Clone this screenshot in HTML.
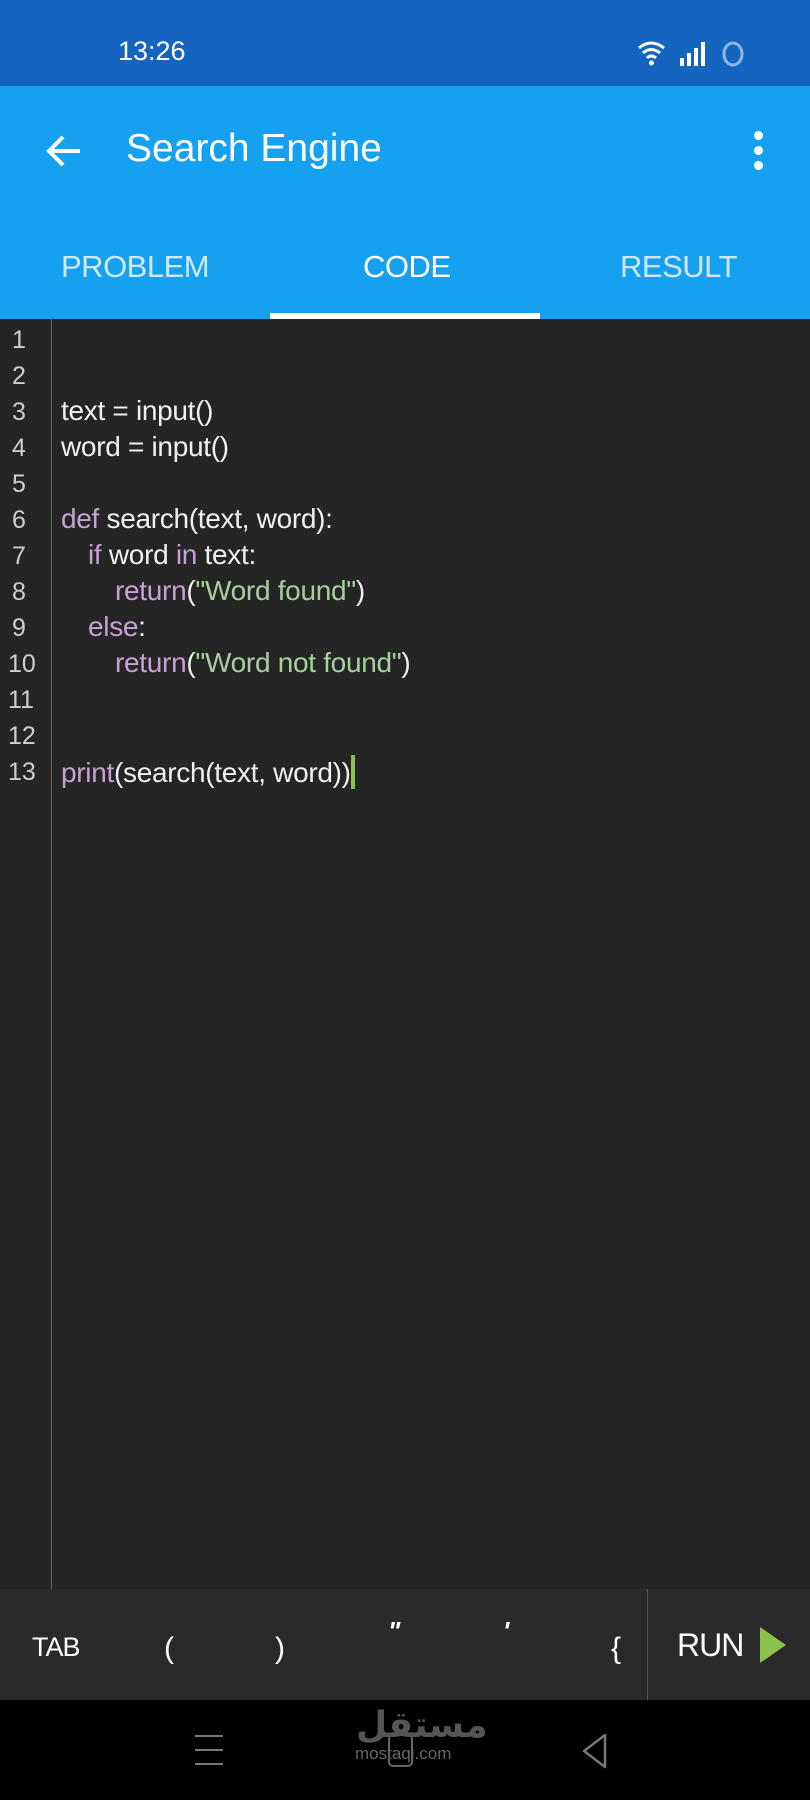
<!DOCTYPE html>
<html><head><meta charset="utf-8"><style>
*{margin:0;padding:0;box-sizing:border-box}
body{width:810px;height:1800px;background:#252525;font-family:"Liberation Sans",sans-serif;position:relative;overflow:hidden;color:#fff}
.abs{position:absolute}
#status{left:0;top:0;width:810px;height:86px;background:#1565c0}
#bar{left:0;top:86px;width:810px;height:233px;background:#15a0f0}
.tab{top:249px;font-size:31px;letter-spacing:-0.5px;color:#cfe9fb}
#code{left:0;top:322px;width:810px}
.ln{position:absolute;left:0;width:44px;font-size:25px;color:#cfcfcf;padding-left:12px}
.cl{position:absolute;left:61px;font-size:28px;color:#f0f0f0;letter-spacing:-0.3px;white-space:pre}
.k{color:#c9a0d6}.s{color:#a5d19a}
#bottom{left:0;top:1589px;width:810px;height:111px;background:#2a2a2a}
.bk{top:1632px;font-size:30px;color:#fff}
#nav{left:0;top:1700px;width:810px;height:100px;background:#000}
</style></head><body>
<div id="status" class="abs">
 <div class="abs" style="left:118px;top:36px;font-size:27px;color:#fff">13:26</div>
 <svg class="abs" style="left:636px;top:38px" width="110" height="30" viewBox="0 0 110 30">
  <path d="M3 10 Q15 0 28 10" stroke="#fff" stroke-width="3" fill="none"/>
  <path d="M7 15 Q15 8 24 15" stroke="#fff" stroke-width="3" fill="none"/>
  <path d="M11 20 Q15 16 20 20" stroke="#fff" stroke-width="3" fill="none"/>
  <circle cx="15.5" cy="25" r="2.5" fill="#fff"/>
  <rect x="44" y="20" width="4" height="8" fill="#fff"/><rect x="51" y="15" width="4" height="13" fill="#fff"/>
  <rect x="58" y="10" width="4" height="18" fill="#fff"/><rect x="65" y="4" width="4" height="24" fill="#fff"/>
  <ellipse cx="97" cy="16" rx="9" ry="11" stroke="#8fb6e8" stroke-width="3" fill="none"/>
 </svg>
</div>
<div id="bar" class="abs">
 <svg class="abs" style="left:44px;top:45px" width="40" height="40" viewBox="0 0 40 40"><path d="M36 20H6M19 6L5 20l14 14" stroke="#fff" stroke-width="4" fill="none"/></svg>
 <div class="abs" style="left:126px;top:41px;font-size:39px;color:#fff">Search Engine</div>
 <div class="abs" style="left:754px;top:45px;width:10px">
  <div style="width:9px;height:9px;border-radius:50%;background:#fff;margin-bottom:6px"></div>
  <div style="width:9px;height:9px;border-radius:50%;background:#fff;margin-bottom:6px"></div>
  <div style="width:9px;height:9px;border-radius:50%;background:#fff"></div>
 </div>
</div>
<div class="abs tab" style="left:61px">PROBLEM</div>
<div class="abs tab" style="left:363px;color:#fff">CODE</div>
<div class="abs tab" style="left:620px">RESULT</div>
<div class="abs" style="left:270px;top:313px;width:270px;height:6px;background:#fff"></div>
<div class="abs" style="left:51px;top:319px;width:1px;height:1270px;background:#666"></div>
<div id="code" class="abs">
 <div class="ln" style="top:4px">1</div>
 <div class="ln" style="top:40px">2</div>
 <div class="ln" style="top:76px">3</div>
 <div class="ln" style="top:112px">4</div>
 <div class="ln" style="top:148px">5</div>
 <div class="ln" style="top:184px">6</div>
 <div class="ln" style="top:220px">7</div>
 <div class="ln" style="top:256px">8</div>
 <div class="ln" style="top:292px">9</div>
 <div class="ln" style="top:328px;padding-left:8px">10</div>
 <div class="ln" style="top:364px;padding-left:8px">11</div>
 <div class="ln" style="top:400px;padding-left:8px">12</div>
 <div class="ln" style="top:436px;padding-left:8px">13</div>
 <div class="cl" style="top:73px">text = input()</div>
 <div class="cl" style="top:109px">word = input()</div>
 <div class="cl" style="top:181px"><span class="k">def</span> search(text, word):</div>
 <div class="cl" style="top:217px;left:88px"><span class="k">if</span> word <span class="k">in</span> text:</div>
 <div class="cl" style="top:253px;left:115px"><span class="k">return</span>(<span class="s">"Word found"</span>)</div>
 <div class="cl" style="top:289px;left:88px"><span class="k">else</span>:</div>
 <div class="cl" style="top:325px;left:115px"><span class="k">return</span>(<span class="s">"Word not found"</span>)</div>
 <div class="cl" style="top:433px"><span class="k">print</span>(search(text, word))<span style="display:inline-block;width:4px;height:34px;background:#8bc34a;vertical-align:-7px"></span></div>
</div>
<div id="bottom" class="abs">
 <div class="abs" style="left:647px;top:0;width:1px;height:111px;background:#555"></div>
</div>
<div class="abs" style="left:32px;top:1632px;font-size:27px;letter-spacing:-1px">TAB</div>
<div class="abs bk" style="left:164px">(</div>
<div class="abs bk" style="left:275px">)</div>
<div class="abs" style="left:388px;top:1616px;font-size:26px;font-style:italic;font-weight:bold">"</div>
<div class="abs" style="left:503px;top:1616px;font-size:26px;font-style:italic;font-weight:bold">'</div>
<div class="abs bk" style="left:611px">{</div>
<div class="abs" style="left:677px;top:1627px;font-size:32px;letter-spacing:-1px">RUN</div>
<svg class="abs" style="left:760px;top:1627px" width="28" height="36"><path d="M0 0L26 18L0 36Z" fill="#8bc34a"/></svg>
<div id="nav" class="abs">
 <div class="abs" style="left:195px;top:35px;width:28px;height:2px;background:#777"></div>
 <div class="abs" style="left:195px;top:49px;width:28px;height:2px;background:#777"></div>
 <div class="abs" style="left:195px;top:63px;width:28px;height:2px;background:#777"></div>
 <div class="abs" style="left:388px;top:34px;width:25px;height:33px;border:2px solid #666;border-radius:5px"></div>
 <div class="abs" style="left:356px;top:5px;font-size:36px;font-weight:bold;color:#555;font-family:'DejaVu Sans',sans-serif">مستقل</div>
 <div class="abs" style="left:355px;top:44px;font-size:17px;color:#666">mostaql.com</div>
 <svg class="abs" style="left:580px;top:33px" width="30" height="36"><path d="M25 2L4 18L25 34Z" stroke="#777" stroke-width="2.5" fill="none" stroke-linejoin="round"/></svg>
</div>
</body></html>
